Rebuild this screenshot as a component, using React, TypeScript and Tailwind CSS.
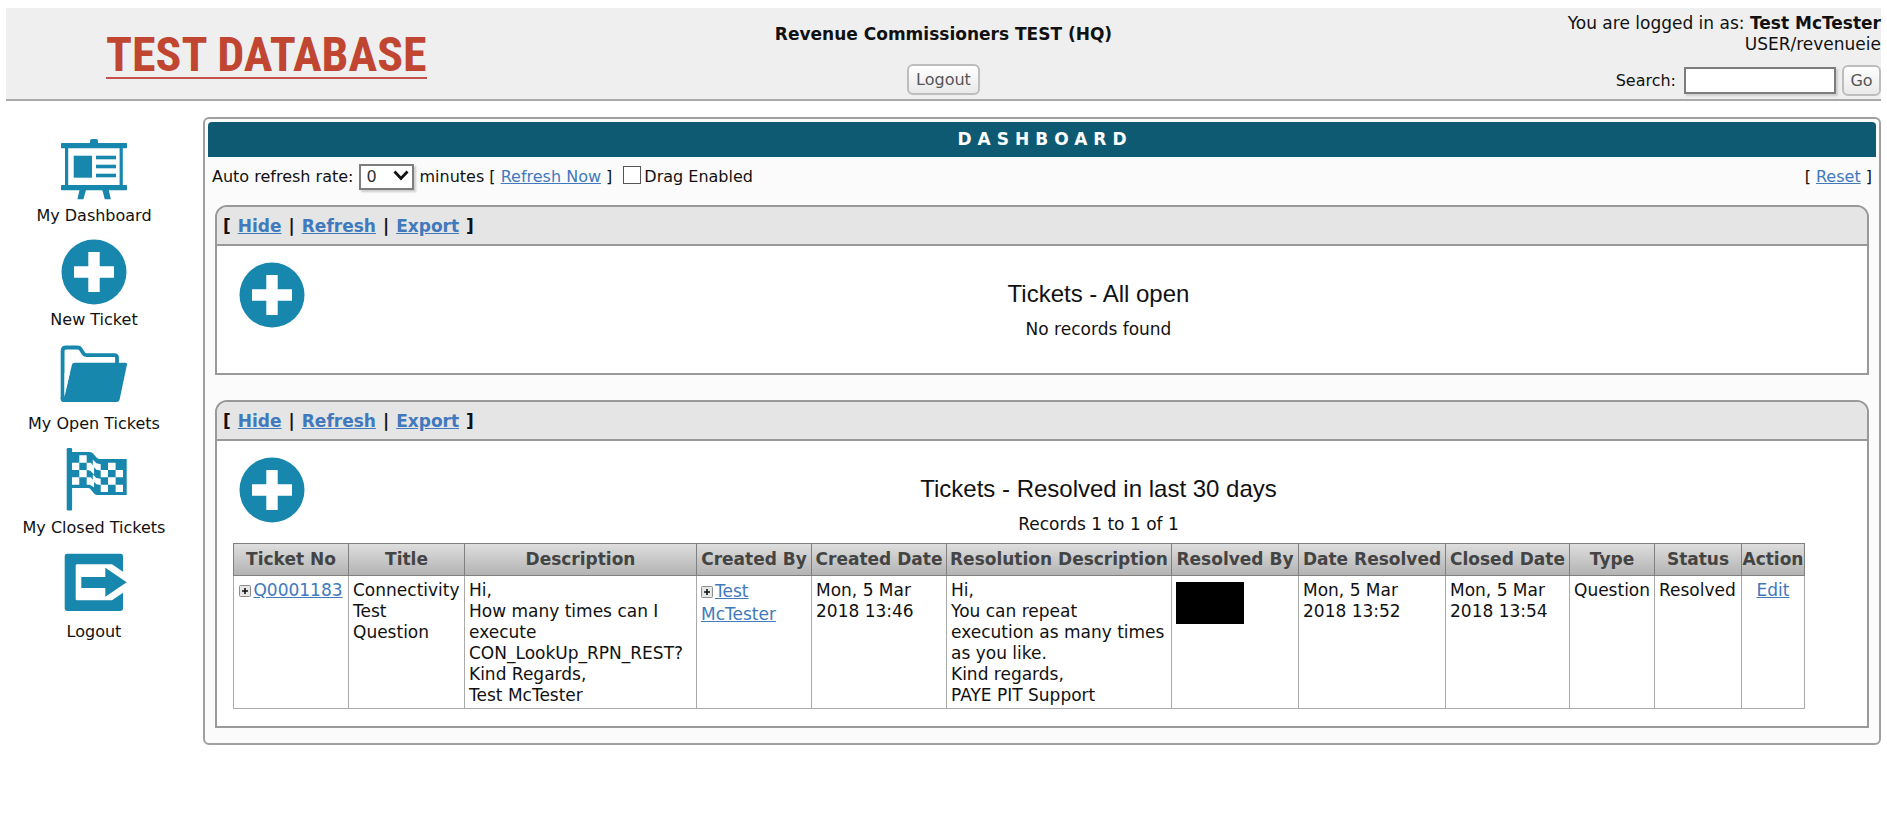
import type { ReactNode } from 'react';

const BLUE = '#1787ad';

function BoardIcon() {
  return (
    <svg viewBox="0 0 66 66" className="block h-[66px] w-[66px]" fill={BLUE} aria-hidden="true">
      <path d="M29 9V6q0-2 2-2h4q2 0 2 2v3z" />
      <rect x="0" y="8" width="66" height="5.2" rx="0.8" />
      <rect x="4" y="12" width="3.2" height="40" />
      <rect x="58.6" y="12" width="3.2" height="40" />
      <rect x="0" y="50" width="66" height="5.2" rx="0.8" />
      <rect x="12.7" y="20.7" width="18.3" height="22" />
      <rect x="35" y="20.7" width="20" height="3.6" />
      <rect x="35" y="29.7" width="20" height="3.6" />
      <rect x="35" y="38.7" width="20" height="3.6" />
      <path d="M18.5 55h6.5l-2.6 9.3h-6zM41.3 55h6.5l2 9.3h-6z" />
    </svg>
  );
}

function PlusIcon() {
  return (
    <svg viewBox="0 0 66 66" className="block h-[66px] w-[66px]" aria-hidden="true">
      <circle cx="33" cy="33" r="32.5" fill={BLUE} />
      <path d="M27.3 13h11.4v14.3H53v11.4H38.7V53H27.3V38.7H13V27.3h14.3z" fill="#fff" />
    </svg>
  );
}

function FolderIcon() {
  return (
    <svg viewBox="0 0 68 66" className="block h-[66px] w-[68px]" aria-hidden="true">
      <path
        d="M2.6 56V8q0-3.5 3.5-3.5h11.5q2 0 3 1.6l2.8 4.4q1 1.6 3 1.6h28q2.6 0 2.6 2.6V21"
        fill="none"
        stroke={BLUE}
        strokeWidth="3.8"
      />
      <path d="M14.5 19.7H65.6q1.8 0 1.4 1.8L59.6 56.5q-.6 2.5-3 2.5H3.4Q.7 59 .7 56V54l3.2 0L12 21.6q.5-1.9 2.5-1.9z" fill={BLUE} />
      <path d="M4.5 54V30h5.4z" fill="#fff" />
    </svg>
  );
}

function FlagIcon() {
  return (
    <svg viewBox="0 0 66 66" className="block h-[66px] w-[66px]" aria-hidden="true">
      <rect x="5.7" y="1" width="5.4" height="62.5" rx="1.2" fill={BLUE} />
      <path d="M11 5h17.5q2.5 0 4 2l3 3.6q1 1.4 3 1.4h27.2v36H36.5q-2 0-3.4-1.6l-3.4-4Q28.6 41 27 41H11z" fill={BLUE} />
      <path
        fill="#fff"
        d="M18.3 8.3h7.4v7.4h-7.4zM11 15.7h7.3V23H11zM18.3 23h7.4v7.3h-7.4zM11 30.3h7.3v7.4H11z
           M25.7 15.7h4.2l3.2 4.5v7.3L29 23.6l-3.3-.6zM25.7 30.3h4.2l3.2 4.5v5.6L29 37.7h-3.3z
           M31.8 12.5l3.6 3.8 4.3.9v6.3l-4.3-.8-3.6-4zM31.8 27.5l3.6 3.6 4.3.6v6.3l-4.3-.8-3.6-4z
           M47 15.7h7.6V23H47zM39.7 23H47v7.3h-7.3zM54.6 23H62v7.3h-7.4zM47 30.3h7.6v7.4H47zM39.7 37.7H47V45h-7.3zM54.6 37.7H62V45h-7.4z"
      />
    </svg>
  );
}

function ExitIcon() {
  return (
    <svg viewBox="0 0 66 66" className="block h-[66px] w-[66px]" aria-hidden="true">
      <rect x="3.7" y="2.7" width="58.3" height="57.3" rx="2.4" fill={BLUE} />
      <path d="M16 13.3h35L66 23.5v15.5L51 49.3H16q-1.3 0-1.3-1.3V14.6q0-1.3 1.3-1.3z" fill="#fff" />
      <path d="M20.3 26h24v-9.3L65.7 31.3 44.3 45.7V37h-24z" fill={BLUE} />
    </svg>
  );
}

function ExpandIcon() {
  return (
    <svg viewBox="0 0 12 12" className="mr-[2px] inline-block h-3 w-3" aria-hidden="true">
      <rect x="0.5" y="0.5" width="11" height="11" rx="1" fill="#e6e6e6" stroke="#8c8c8c" />
      <path d="M3 6h6M6 3v6" stroke="#111" strokeWidth="1.6" />
    </svg>
  );
}

function Link({ children }: { children: ReactNode }) {
  return (
    <a href="#" className="text-[#4179bd] underline">
      {children}
    </a>
  );
}

const buttonClass =
  'flex h-[31px] items-center justify-center rounded-md border-2 border-[#bdbdbd] bg-linear-to-b from-white to-[#e9e9e9] text-base text-[#555]';

function Header() {
  return (
    <header className="grid grid-cols-3 border-b-2 border-[#aaa] bg-[#efefef] text-[17px] leading-5">
      <div className="pt-6 pl-[100px]">
        <a
          href="#"
          className="inline-block border-b-2 border-[#c4514a] font-['Roboto_Condensed','Liberation_Sans_Narrow',sans-serif] text-5xl leading-[45px] font-bold whitespace-nowrap text-[#c04632]"
        >
          TEST DATABASE
        </a>
      </div>
      <div className="flex flex-col items-center pt-4">
        <h1 className="font-bold whitespace-nowrap">Revenue Commissioners TEST (HQ)</h1>
        <button type="button" className={`${buttonClass} mt-5 px-[7px]`}>
          Logout
        </button>
      </div>
      <div className="flex flex-col items-end pt-[5px] pb-[3px]">
        <p className="text-right leading-[21px]">
          You are logged in as: <b>Test McTester</b>
          <br />
          USER/revenueie
        </p>
        <form className="mt-[10px] flex items-center text-base" onSubmit={(e) => e.preventDefault()}>
          <label htmlFor="search" className="mr-2">
            Search:
          </label>
          <input
            id="search"
            type="text"
            className="h-[27px] w-[152px] border-2 border-[#7d7d7d] bg-white px-1 shadow-[2px_2px_2px_#ccc]"
          />
          <button type="submit" className={`${buttonClass} ml-[6px] w-[39px]`}>
            Go
          </button>
        </form>
      </div>
    </header>
  );
}

const navItems = [
  { label: 'My Dashboard', icon: <BoardIcon /> },
  { label: 'New Ticket', icon: <PlusIcon /> },
  { label: 'My Open Tickets', icon: <FolderIcon /> },
  { label: 'My Closed Tickets', icon: <FlagIcon /> },
  { label: 'Logout', icon: <ExitIcon /> },
];

function Sidebar() {
  return (
    <nav className="mr-[21px] w-[176px] shrink-0 pt-[18px] text-base leading-5">
      <ul>
        {navItems.map((item) => (
          <li key={item.label} className="h-[104px]">
            <a href="#" className="flex flex-col items-center gap-[5px] whitespace-nowrap">
              {item.icon}
              {item.label}
            </a>
          </li>
        ))}
      </ul>
    </nav>
  );
}

function Toolbar() {
  return (
    <div className="flex items-center px-1 py-[7px] text-base leading-5">
      <label htmlFor="rate">Auto refresh rate:</label>
      <div className="relative mr-[5px] ml-[6px]">
        <select
          id="rate"
          className="block h-[26px] w-[55px] appearance-none border-2 border-[#7d7d7d] bg-white pl-[5px] text-[#333] shadow-[2px_2px_2px_#ccc]"
        >
          <option>0</option>
        </select>
        <svg viewBox="0 0 16 11" className="pointer-events-none absolute top-[6px] right-[5px] h-[11px] w-4" aria-hidden="true">
          <path d="M1.5 1.5L8 8.5l6.5-7" fill="none" stroke="#111" strokeWidth="2.8" />
        </svg>
      </div>
      <span>
        minutes [ <Link>Refresh Now</Link> ]
      </span>
      <input
        id="drag"
        type="checkbox"
        className="mr-[3px] mb-1 ml-[11px] h-[18px] w-[18px] appearance-none border border-[#555] bg-white checked:bg-[#1787ad]"
      />
      <label htmlFor="drag">Drag Enabled</label>
      <span className="ml-auto">
        [ <Link>Reset</Link> ]
      </span>
    </div>
  );
}

function Widget({ title, records, children }: { title: string; records: string; children?: ReactNode }) {
  return (
    <section className="rounded-t-xl border-2 border-[#999] bg-white text-[17px]">
      <div className="flex gap-[7px] rounded-t-[10px] border-b-2 border-[#999] bg-[#e5e5e5] px-[6px] pt-[9px] pb-[7px] leading-[21px] font-bold">
        <span>[</span>
        <Link>Hide</Link>
        <span>|</span>
        <Link>Refresh</Link>
        <span>|</span>
        <Link>Export</Link>
        <span>]</span>
      </div>
      <div className="flex">
        <a href="#" aria-label="New ticket" className="mr-[25px] ml-[22px] pt-4">
          <PlusIcon />
        </a>
        <div className="flex-1 pt-[34px] text-center">
          <h2 className="font-['Liberation_Sans',sans-serif] text-2xl leading-7">{title}</h2>
          <p className="mt-[11px] leading-5">{records}</p>
        </div>
      </div>
      {children}
    </section>
  );
}

const columns = [
  { name: 'Ticket No', width: 'w-[115px]' },
  { name: 'Title', width: 'w-[116px]' },
  { name: 'Description', width: 'w-[232px]' },
  { name: 'Created By', width: 'w-[115px]' },
  { name: 'Created Date', width: 'w-[135px]' },
  { name: 'Resolution Description', width: 'w-[225px]' },
  { name: 'Resolved By', width: 'w-[127px]' },
  { name: 'Date Resolved', width: 'w-[147px]' },
  { name: 'Closed Date', width: 'w-[124px]' },
  { name: 'Type', width: 'w-[85px]' },
  { name: 'Status', width: 'w-[87px]' },
  { name: 'Action', width: 'w-[63px]' },
];

function TicketTable() {
  return (
    <table className="mt-[9px] mb-[17px] ml-4 w-[95%] table-fixed border-collapse leading-[21px]">
      <colgroup>
        {columns.map((c) => (
          <col key={c.name} className={c.width} />
        ))}
      </colgroup>
      <thead>
        <tr className="bg-linear-to-b from-[#dedede] to-[#b2b2b2] text-[#444]">
          {columns.map((c) => (
            <th key={c.name} scope="col" className="border border-[#808080] py-[5px] text-center font-bold whitespace-nowrap">
              {c.name}
            </th>
          ))}
        </tr>
      </thead>
      <tbody>
        <tr className="align-top *:border *:border-[#aaa] *:px-1 *:pt-1 *:pb-[2px]">
          <td className="text-center whitespace-nowrap">
            <ExpandIcon />
            <Link>Q0001183</Link>
          </td>
          <td>Connectivity Test Question</td>
          <td className="whitespace-nowrap">
            Hi,
            <br />
            How many times can I
            <br />
            execute
            <br />
            CON_LookUp_RPN_REST?
            <br />
            Kind Regards,
            <br />
            Test McTester
          </td>
          <td className="leading-[23px]">
            <ExpandIcon />
            <Link>Test McTester</Link>
          </td>
          <td>
            Mon, 5 Mar
            <br />
            2018 13:46
          </td>
          <td className="whitespace-nowrap">
            Hi,
            <br />
            You can repeat
            <br />
            execution as many times
            <br />
            as you like.
            <br />
            Kind regards,
            <br />
            PAYE PIT Support
          </td>
          <td>
            <div className="mt-[2px] h-[42px] w-[68px] bg-black" />
          </td>
          <td>
            Mon, 5 Mar
            <br />
            2018 13:52
          </td>
          <td>
            Mon, 5 Mar
            <br />
            2018 13:54
          </td>
          <td>Question</td>
          <td>Resolved</td>
          <td className="text-center">
            <Link>Edit</Link>
          </td>
        </tr>
      </tbody>
    </table>
  );
}

export default function App() {
  return (
    <div className="min-h-screen bg-white px-[6px] pt-2 pb-6 font-['DejaVu_Sans',sans-serif] text-[#111]">
      <Header />
      <div className="flex items-start pt-4">
        <Sidebar />
        <main className="min-w-0 flex-1 rounded-md border-2 border-[#a0a0a0] bg-[#fbfbfb] p-[3px]">
          <h2 className="rounded-t-sm bg-[#0f5a73] py-[7px] pl-[6px] text-center text-[17px] leading-[21px] font-bold tracking-[6px] text-white">
            DASHBOARD
          </h2>
          <Toolbar />
          <div className="flex flex-col gap-[25px] px-[7px] pt-2 pb-3">
            <Widget title="Tickets - All open" records="No records found">
              <div className="h-[34px]" />
            </Widget>
            <Widget title="Tickets - Resolved in last 30 days" records="Records 1 to 1 of 1">
              <TicketTable />
            </Widget>
          </div>
        </main>
      </div>
    </div>
  );
}
